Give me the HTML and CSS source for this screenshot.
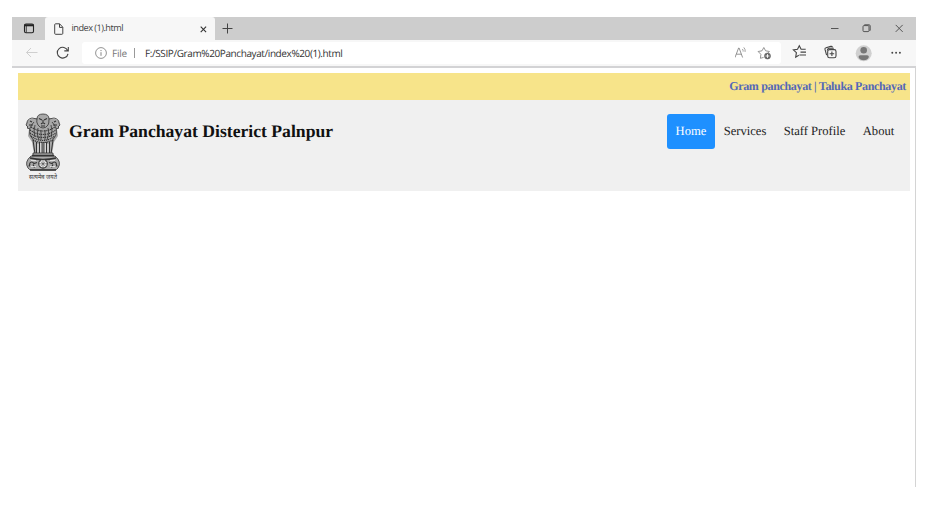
FILE: index.html
```html
<!DOCTYPE html>
<html lang="en">
<head>
<meta charset="utf-8">
<title>Gram Panchayat</title>
<link rel="stylesheet" href="styles.css">
</head>
<body>
<div class="window">
  <div class="tabbar">
    <svg class="tab-menu" width="33" height="23" viewBox="0 0 33 23"><rect x="12.5" y="7" width="9" height="8.8" rx="1.5" fill="none" stroke="#222" stroke-width="1.1"/><path d="M12.5 8.3h9" stroke="#222" stroke-width="2"/><path d="M14.3 9v6.5" stroke="#222" stroke-width=".8"/></svg>
    <div class="tab">
      <svg class="doc" width="10" height="12" viewBox="0 0 10 12"><path d="M1.6.8h4l3.2 3.4v6.2a.9.9 0 0 1-.9.9H1.6a.9.9 0 0 1-.9-.9V1.7a.9.9 0 0 1 .9-.9zM5.5.9v3.5h3.2" fill="none" stroke="#444" stroke-width="1"/></svg>
      <span class="tab-title">index (1).html</span>
      <svg class="close" width="7" height="7" viewBox="0 0 7 7"><path d="M.7.7l5.4 5.4M6.1.7L.7 6.1" stroke="#333" stroke-width="1.1"/></svg>
    </div>
    <svg class="plus" width="11" height="11" viewBox="0 0 11 11"><path d="M5.5.5v10M.5 5.5h10" stroke="#444" stroke-width="1"/></svg>
    <svg class="controls" width="90" height="23" viewBox="0 0 90 23" fill="none" stroke="#555" stroke-width="1"><path d="M5 11.5h7.5"/><rect x="37" y="8.6" width="6" height="6" rx="1"/><path d="M38.5 8.3V7.8h4.5q1.2 0 1.2 1.2v4.4h-.8"/><path d="M69.7 7.9l7 7M76.7 7.9l-7 7"/></svg>
  </div>
  <div class="toolbar">
    <svg class="nav-icons" width="69" height="26" viewBox="0 0 69 26" fill="none"><path d="M25.5 12.5H14.5M19 8l-4.5 4.5L19 17" stroke="#cfcfcf"/><path d="M55.7 10.6A5.4 5.4 0 1 0 56 13.8M56.3 7v3.9h-4" stroke="#444" stroke-width="1.1"/></svg>
    <div class="address">
      <svg class="info" width="12" height="12" viewBox="0 0 12 12" fill="none" stroke="#777"><circle cx="6" cy="6" r="5.4" stroke-width=".8"/><path d="M6 5.2v3.6M6 3v1.1" stroke-width=".9"/></svg>
      <span class="scheme">File</span>
      <span class="divider"></span>
      <span class="url">F:/SSIP/Gram%20Panchayat/index%20(1).html</span>
      <svg class="address-icons" width="40" height="20" viewBox="0 0 40 20" fill="none" stroke="#888" stroke-width=".9"><path d="M0 14.5l3.6-9.5h.5l3.5 9.5M1.3 11.2h5.1"/><path d="M7.4 6q1 1.2.7 2.6M8.8 4.4q1.8 1.9 1.3 4.5" stroke-width=".8"/><path d="M28.6 14.4l-3.2.9.5-4-2.8-2.8 3.9-.7 1.8-3.3 1.8 3.3 3.8.7-1.2 1.4"/><circle cx="32.5" cy="13" r="3.1" fill="#666" stroke="#666" stroke-width=".5"/><path d="M30.6 13h3.8M32.5 11.1v3.8" stroke="#fff" stroke-width=".9"/></svg>
    </div>
    <svg class="actions" width="136" height="26" viewBox="0 0 136 26" fill="none" stroke="#444" stroke-width="1.1"><path d="M18.8 15.2l-3.1 1.9.7-4.5-3-2.7 4.1-.6 1.8-3.5 1.8 3.5h4.6M20.5 12.1h5.5M19.4 15h6.6"/><path d="M46.6 15.2l-1.6-5.8q-.3-1.3 1-1.6l4.8-1.4q1.3-.3 1.7 1"/><rect x="47.7" y="9.6" width="8.3" height="8.2" rx="1.8"/><path d="M51.9 11.4v4.6M49.6 13.7h4.6M47.2 10.5q.2-2.2 2-2.2h4.6"/><circle cx="83.7" cy="13.3" r="8" fill="#d0d0d0" stroke="none"/><circle cx="83.7" cy="10.2" r="3.3" fill="#777" stroke="none"/><path d="M78.5 17q0-1.8 1.8-1.8h6.8q1.8 0 1.8 1.8-1.3 3.2-5.2 3.2T78.5 17z" fill="#777" stroke="none"/><g fill="#444" stroke="none"><circle cx="112.3" cy="12.8" r=".95"/><circle cx="116.1" cy="12.8" r=".95"/><circle cx="119.9" cy="12.8" r=".95"/></g></svg>
  </div>
  <div class="page">
    <div class="topbar">Gram panchayat | Taluka Panchayat</div>
    <header class="header">
      <svg class="emblem" width="36" height="68" viewBox="0 0 36 68" fill="none" stroke="#333" stroke-width=".8">
        <path d="M12 5q1-4 6-4t6 4l6 1q5 1 5 6.5L32 16l1 7-4 6-2 12H9L7 29l-4-6 1-7-3-3.5Q1 7 6 6z" fill="#a8a8a8" stroke="none"/>
        <path d="M12 6q0-5 6-5t6 5-1 6q-2 3-5 3t-5-3-1-6zM12 6L7 5Q2 6 2 10l-1 2 2 2-1 1 3 1M24 6l5-1q5 1 5 5l1 2-2 2 1 1-3 1"/>
        <path d="M14 5.5l3 1.5M22 5.5l-3 1.5M16 11q2-2 4 0M16 13h4M18 7v3M5 8l2 1M31 8l-2 1M4 12h4M32 12h-4" stroke-width="1.1"/>
        <path d="M9 9q-6 6-4 13l4 6M27 9q6 6 4 13l-4 6M10 12q-2 6 0 12M26 12q2 6 0 12M13 15q-2 6 1 12M23 15q2 6-1 12M16 17v10M20 17v10"/>
        <path d="M6 14q12 8 24 0M5 17q13 9 26 0M5 20q13 9 26 0M6 23q12 9 24 0M8 27q10 5 20 0" stroke-dasharray="1.2 .8" stroke-width="1.2"/>
        <path d="M8 27l2 14M11.5 29v12M14.5 29v12M21.5 29v12M24.5 29v12M28 27l-2 14M17 29v12M19 29v12" stroke-width="1"/>
        <path d="M13 31v9M15.8 30v11M20.2 30v11M23 31v9" stroke="#f0f0f0" stroke-width=".9"/>
        <path d="M8 40h20v2.5H8zM6 43q-7 6-3 12 1 2 4 2h22q3 0 4-2 4-6-3-12z" fill="#aaa"/>
        <path d="M7 42.5h22M5 45q13 3 26 0M5 57h26" stroke-width="1.4"/>
        <circle cx="18" cy="50.8" r="4.3" fill="#ededed" stroke-width="1.1"/>
        <path d="M18 46.8v8M14 50.8h8M15.2 48l5.6 5.6M20.8 48l-5.6 5.6" stroke-width=".5"/>
        <path d="M4.5 50.5q2-3 4.500 0l3-1M5 50.500l-1 3M8 51.500l1.500 3M31.500 50.500q-2-3-4.500 0l-3-1M31 50.500l1 3M28 51.500l-1.500 3" stroke-width="1.200"/>
        <path d="M6 53.500h5M25 53.500h5M6 47.500h5M25 47.500h5" stroke="#eee" stroke-width=".8"/>
        <text class="motto" x="18" y="65.500" text-anchor="middle" textLength="28" lengthAdjust="spacingAndGlyphs">सत्यमेव जयते</text>
      </svg>
      <h1 class="title">Gram Panchayat Disterict Palnpur</h1>
      <nav class="nav">
        <a class="link active">Home</a>
        <a class="link services">Services</a>
        <a class="link staff">Staff Profile</a>
        <a class="link about">About</a>
      </nav>
    </header>
  </div>
</div>
</body>
</html>
```
FILE: styles.css
```css
* { box-sizing: border-box; }
body { margin: 0; padding: 17px 0 0 12px; background: #fff; font-family: "Liberation Serif", serif; text-rendering: geometricPrecision; }
svg { display: block; flex: none; }
.window { width: 904px; height: 470px; display: flex; flex-direction: column; }
.tabbar { height: 23px; background: #cdcdcd; display: flex; align-items: center; flex: none; }
.tab { width: 170px; height: 23px; padding-left: 9px; background: #f7f7f7; border-radius: 3px 3px 0 0; display: flex; align-items: center; font: 9.2px "Open Sans", sans-serif; color: #444; }
.tab-title { width: 51px; margin: -2px 0 0 7.5px; white-space: nowrap; letter-spacing: -.52px; }
.close { margin: 1px 0 0 77.5px; }
.plus { margin-left: 6.5px; }
.controls { margin-left: auto; }
.toolbar { height: 26px; background: #f7f7f7; display: flex; align-items: center; flex: none; }
.address { width: 699px; height: 22px; margin-left: 1px; padding-left: 13px; background: #fff; border-radius: 3px; display: flex; align-items: center; font: 10px "Open Sans", sans-serif; white-space: nowrap; }
.scheme { width: 16px; margin-left: 5px; color: #777; letter-spacing: -.2px; }
.divider { width: 1px; height: 10px; margin-left: 6px; background: #999; }
.url { width: 200px; margin-left: 10px; color: #333; letter-spacing: -.4px; }
.address-icons { margin-left: auto; margin-right: 6px; }
.actions { margin-left: -1px; }
.page { flex: 1; padding: 5px 5px 0 6px; border-top: 2px solid #d3d3d5; border-right: 1px solid #d4d4d4; }
.topbar { height: 27px; padding-right: 4px; background: #f7e48a; color: #5468b8; font-weight: bold; font-size: 12px; line-height: 27px; text-align: right; letter-spacing: -.34px; }
.header { height: 91px; padding: 13px 7px 0 7px; background: #f0f0f0; display: flex; align-items: flex-start; }
.motto { font: 6.5px "Noto Sans Devanagari", "Noto Sans", sans-serif; fill: #333; stroke: none; }
.title { margin: 7px 0 0 8px; font-size: 17.65px; line-height: 22px; color: #111; white-space: nowrap; }
.nav { margin: 1px 0 0 auto; display: flex; }
.link { height: 35px; font-size: 12.6px; line-height: 35px; color: #222; text-align: center; white-space: nowrap; }
.active { width: 48px; background: #1e90ff; color: #fff; border-radius: 3px; }
.services { width: 60px; }
.staff { width: 79px; }
.about { width: 49px; }
```
